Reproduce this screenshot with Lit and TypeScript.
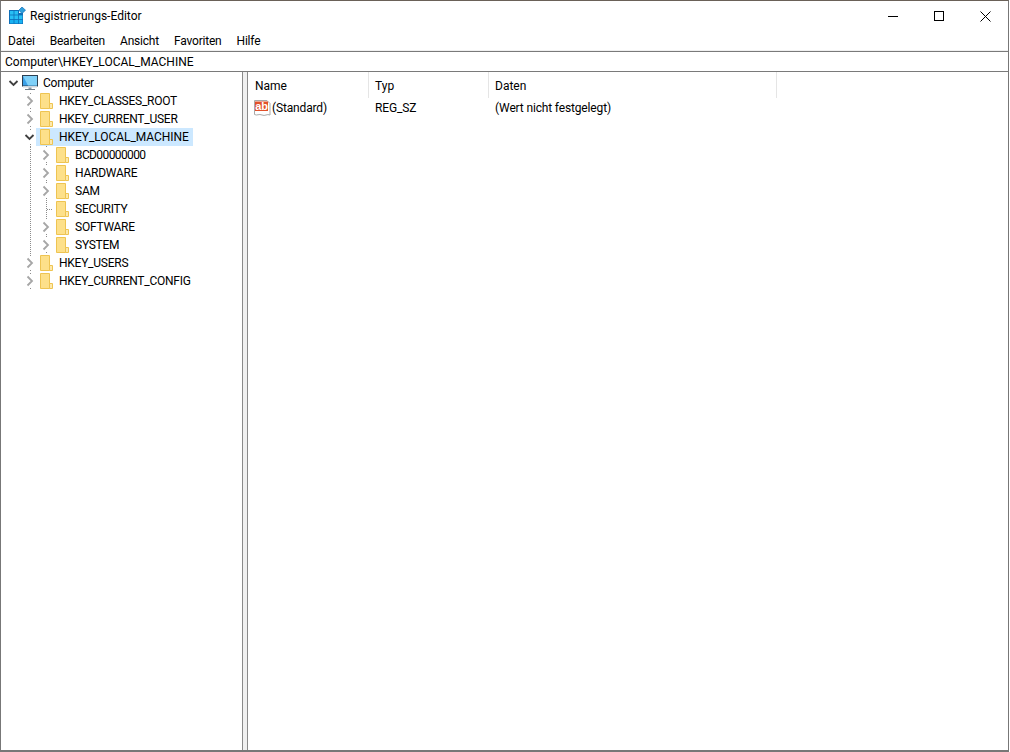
import { LitElement, html, css, svg } from "lit";
import { customElement } from "lit/decorators.js";

type Node = { label: string; twist: "open" | "closed" | "leaf"; depth: number; selected?: boolean; digits?: boolean };

const nodes: Node[] = [
  { label: "HKEY_CLASSES_ROOT", twist: "closed", depth: 1 },
  { label: "HKEY_CURRENT_USER", twist: "closed", depth: 1 },
  { label: "HKEY_LOCAL_MACHINE", twist: "open", depth: 1, selected: true },
  { label: "BCD00000000", twist: "closed", depth: 2, digits: true },
  { label: "HARDWARE", twist: "closed", depth: 2 },
  { label: "SAM", twist: "closed", depth: 2 },
  { label: "SECURITY", twist: "leaf", depth: 2 },
  { label: "SOFTWARE", twist: "closed", depth: 2 },
  { label: "SYSTEM", twist: "closed", depth: 2 },
  { label: "HKEY_USERS", twist: "closed", depth: 1 },
  { label: "HKEY_CURRENT_CONFIG", twist: "closed", depth: 1 },
];

const dots = (x: number, ys: number[]) =>
  ys.map((y) => svg`<rect x=${x} y=${y} width="1" height="1" fill="#8c8c8c"></rect>`);

const twisty = (t: Node["twist"], depth: number) => {
  const connect = depth === 2;
  return html`<svg class="twisty" width="13" height="18" viewBox="0 0 13 18">
    ${t === "open"
      ? svg`<path d="M2.5 7 L6.5 11 L10.5 7" fill="none" stroke="#404040" stroke-width="1.8"></path>`
      : t === "closed"
        ? svg`<path d="M4.5 4.5 L9 9 L4.5 13.5" fill="none" stroke="#a6a6a6" stroke-width="1.8"></path>`
        : svg`${dots(7, [0, 2, 4, 6, 8, 10, 12, 14, 16])}${dots(8, [9])}${dots(10, [9])}${dots(12, [9])}`}
    ${t !== "leaf" && connect ? dots(7, [0, 16]) : ""}
    ${t !== "leaf" && !connect && depth > 0 ? dots(7, [1, 16]) : ""}
  </svg>`;
};

const folder = html`<svg class="folder" width="13" height="16" viewBox="0 0 13 16">
  <path d="M0.5 0.5 H9.5 V15.5 H0.5 Z" fill="#fde08a" stroke="#eec452"></path>
  <path d="M9.5 10.5 H12.5 V15.5 H9.5 Z" fill="#fde9ae" stroke="#eec452"></path>
</svg>`;

const computer = html`<svg class="pc" width="16" height="16" viewBox="0 0 16 16">
  <rect x="0.5" y="0.5" width="15" height="10.5" fill="#3aa0e8" stroke="#2b3f52"></rect>
  <path d="M1 1 H15 V10.5 H6 Z" fill="#7fd0f8"></path>
  <rect x="1" y="11" width="14" height="1.5" fill="#cfd6dc"></rect>
  <rect x="6.5" y="12.5" width="3" height="1.5" fill="#8a98a5"></rect>
  <rect x="3" y="14" width="10" height="1" fill="#6f7d8a"></rect>
</svg>`;

const regedit = html`<svg class="app" width="17" height="17" viewBox="0 0 17 17">
  <path d="M0 3 H10 V6 H14 V17 H0 Z" fill="#0f6fb8"></path>
  ${[0, 1, 2].flatMap((r) =>
    [0, 1, 2].map(
      (c) =>
        svg`<rect x=${1 + c * 4.4} y=${4 + r * 4.4} width="3.6" height="3.6" fill=${r === 0 && c === 2 ? "none" : r === 2 ? "#18b2f2" : "#27c0f5"}></rect>`,
    ),
  )}
  <path d="M13 0 L16.5 3.2 L13 6.5 L9.8 3.2 Z" fill="#2f9fdc" stroke="#0f6fb8" stroke-width="0.7"></path>
</svg>`;

const valueIcon = html`<svg class="ab" width="17" height="18" viewBox="0 0 17 18">
  <path d="M0.5 1.5 H13 L16 4.5 V16 C13 14.5 11 17.5 8 16 C5 14.5 3 17 0.5 15.5 Z" fill="#fff" stroke="#a9a9a9"></path>
  <rect x="1" y="2.5" width="13" height="9.5" fill="#e2512a"></rect>
  <text x="7.5" y="10.5" text-anchor="middle" class="abt">ab</text>
</svg>`;

@customElement("app-root")
export class AppRoot extends LitElement {
  static styles = css`
    :host {
      display: block;
      width: 1010px;
      height: 752px;
      background: #fff;
      font-family: Roboto, "Noto Sans", sans-serif;
      font-size: 12px;
      color: #000;
      overflow: hidden;
    }
    .window {
      box-sizing: border-box;
      width: 1009px;
      height: 752px;
      display: flex;
      flex-direction: column;
      border-top: 1px solid #6a6158;
      border-left: 1px solid #777;
      border-right: 1px solid #777;
    }
    .title {
      height: 30px;
      display: flex;
      align-items: center;
      flex: none;
    }
    .app {
      margin-left: 8px;
      margin-top: -1px;
      flex: none;
    }
    .title-text {
      margin-left: 4px;
      flex: 1;
    }
    .btn {
      width: 46px;
      height: 30px;
      display: flex;
      align-items: center;
      justify-content: center;
    }
    .menu {
      height: 20px;
      display: flex;
      align-items: center;
      padding-left: 7px;
      gap: 15px;
      flex: none;
      border-bottom: 1px solid #f0f0f0;
      box-sizing: border-box;
      letter-spacing: -0.2px;
    }
    .address {
      height: 21px;
      flex: none;
      box-sizing: border-box;
      border-top: 1px solid #7a7a7a;
      border-bottom: 1px solid #7a7a7a;
      display: flex;
      align-items: center;
      padding-left: 4px;
    }
    .panes {
      flex: 1;
      display: flex;
      min-height: 0;
      border-bottom: 2px solid #777;
    }
    .tree {
      width: 241px;
      flex: none;
      padding-top: 2px;
      box-sizing: border-box;
    }
    .splitter {
      width: 4px;
      flex: none;
      background: #f0f0f0;
      border-left: 1px solid #8a8a8a;
      border-right: 1px solid #8a8a8a;
    }
    .row {
      height: 18px;
      display: flex;
      align-items: center;
      white-space: nowrap;
    }
    .twisty {
      flex: none;
    }
    .item {
      display: flex;
      align-items: center;
      height: 18px;
      padding: 0 4px;
      letter-spacing: -0.25px;
    }
    .item.sel {
      background: #cce8ff;
      letter-spacing: -0.05px;
    }
    .item.digits {
      letter-spacing: -0.6px;
    }
    .folder {
      flex: none;
      margin-right: 6px;
    }
    .pc {
      flex: none;
      margin-right: 5px;
      margin-left: -2px;
    }
    .group {
      margin-left: 29px;
      border-left: 1px dotted #8c8c8c;
    }
    .list {
      flex: 1;
      min-width: 0;
    }
    .head {
      height: 27px;
      display: grid;
      grid-template-columns: 121px 120px 288px;
    }
    .col {
      border-right: 1px solid #e5e5e5;
      padding: 2px 0 0 6px;
      display: flex;
      align-items: center;
      margin-bottom: 1px;
    }
    .col.first {
      padding-left: 7px;
    }
    .vrow {
      height: 18px;
      display: grid;
      grid-template-columns: 121px 120px 288px;
      align-items: center;
      white-space: nowrap;
      letter-spacing: -0.15px;
    }
    .cell {
      padding-left: 6px;
      display: flex;
      align-items: center;
    }
    .ab {
      margin-right: 1px;
      flex: none;
    }
    .abt {
      font: bold 11px "Liberation Sans", sans-serif;
      fill: #fff;
    }
  `;

  private rowFor(n: Node) {
    const pad = n.depth === 2 ? 8 : 22;
    return html`<div class="row" style="padding-left:${pad}px">
      ${twisty(n.twist, n.depth)}
      <div class="item ${n.selected ? "sel" : ""} ${n.digits ? "digits" : ""}">${folder}<span>${n.label}</span></div>
    </div>`;
  }

  render() {
    return html`<div class="window">
      <div class="title">
        ${regedit}
        <span class="title-text">Registrierungs-Editor</span>
        <div class="btn">
          <svg width="10" height="10" viewBox="0 0 10 10"><path d="M0 5.5 H10" stroke="#000"></path></svg>
        </div>
        <div class="btn">
          <svg width="10" height="10" viewBox="0 0 10 10"><rect x="0.5" y="0.5" width="9" height="9" fill="none" stroke="#000"></rect></svg>
        </div>
        <div class="btn">
          <svg width="11" height="11" viewBox="0 0 11 11"><path d="M0.5 0.5 L10.5 10.5 M10.5 0.5 L0.5 10.5" stroke="#000"></path></svg>
        </div>
      </div>
      <div class="menu">
        ${["Datei", "Bearbeiten", "Ansicht", "Favoriten", "Hilfe"].map((m) => html`<span>${m}</span>`)}
      </div>
      <div class="address">Computer\\HKEY_LOCAL_MACHINE</div>
      <div class="panes">
        <div class="tree">
          <div class="row" style="padding-left:6px">
            ${twisty("open", 0)}
            <div class="item">${computer}<span>Computer</span></div>
          </div>
          ${nodes.slice(0, 3).map((n) => this.rowFor(n))}
          <div class="group">${nodes.slice(3, 9).map((n) => this.rowFor(n))}</div>
          ${nodes.slice(9).map((n) => this.rowFor(n))}
        </div>
        <div class="splitter"></div>
        <div class="list">
          <div class="head">
            <div class="col first">Name</div>
            <div class="col">Typ</div>
            <div class="col">Daten</div>
          </div>
          <div class="vrow">
            <div class="cell">${valueIcon}<span>(Standard)</span></div>
            <div class="cell">REG_SZ</div>
            <div class="cell">(Wert nicht festgelegt)</div>
          </div>
        </div>
      </div>
    </div>`;
  }
}
